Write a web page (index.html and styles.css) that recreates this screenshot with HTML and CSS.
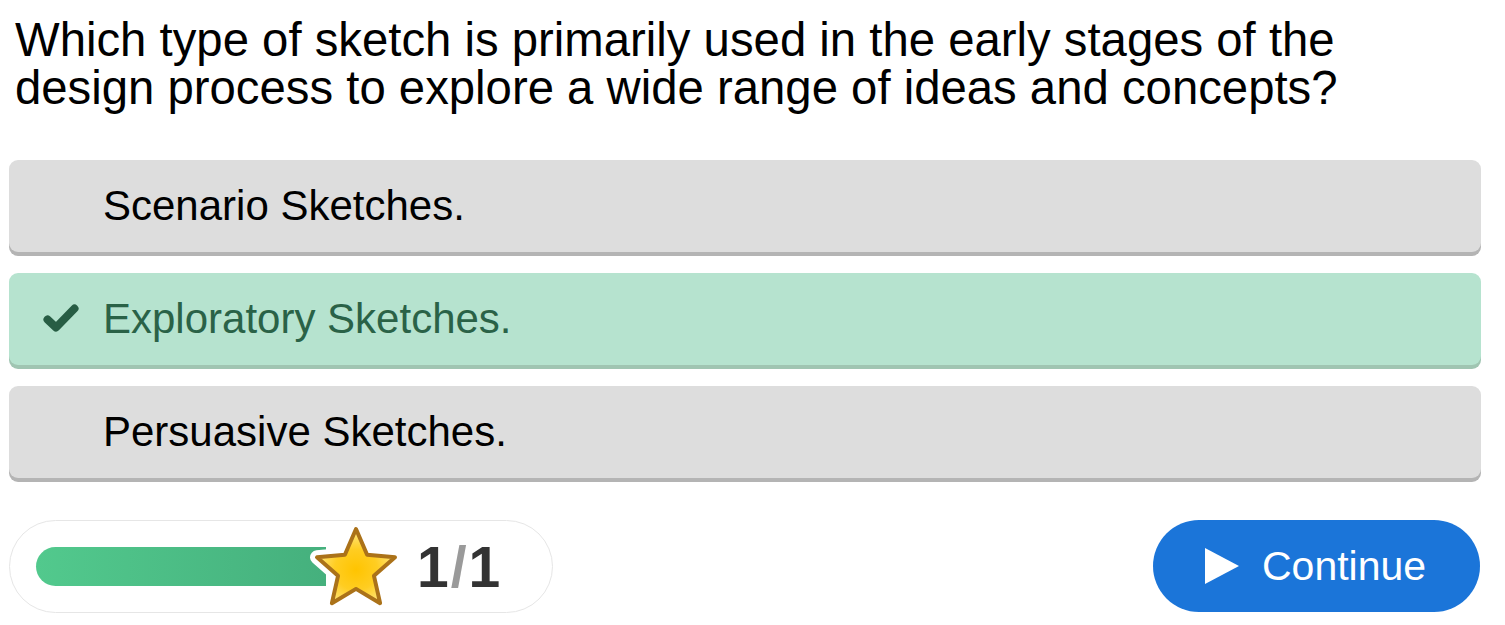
FILE: index.html
```html
<!DOCTYPE html>
<html>
<head>
<meta charset="utf-8">
<link rel="stylesheet" href="styles.css">
</head>
<body>
<div class="quiz">
  <h1 class="question">Which type of sketch is primarily used in the early stages of the design process to explore a wide range of ideas and concepts?</h1>
  <div class="options">
    <div class="option"><span class="mark"></span><span class="label">Scenario Sketches.</span></div>
    <div class="option correct"><span class="mark"><svg width="36" height="28" viewBox="0 0 36 28"><polyline points="4.5,15.5 13,23.5 31.5,4.5" fill="none" stroke="#275d44" stroke-width="8" stroke-linecap="round" stroke-linejoin="round"/></svg></span><span class="label">Exploratory Sketches.</span></div>
    <div class="option"><span class="mark"></span><span class="label">Persuasive Sketches.</span></div>
  </div>
  <div class="footer">
    <div class="progress">
      <div class="track">
        <div class="bar"></div>
        <svg class="star" width="100" height="100" viewBox="-50 -50 100 100">
          <defs>
            <radialGradient id="sg" cx="50%" cy="55%" r="55%">
              <stop offset="0" stop-color="#ffc400"/>
              <stop offset="0.5" stop-color="#ffcd22"/>
              <stop offset="1" stop-color="#ffe98a"/>
            </radialGradient>
          </defs>
          <path d="M0 -41 L11.11 -15.29 L38.99 -12.67 L17.97 5.84 L24.1 33.17 L0 18.9 L-24.1 33.17 L-17.97 5.84 L-38.99 -12.67 L-11.11 -15.29 Z" fill="#ffffff" stroke="#ffffff" stroke-width="14" stroke-linejoin="round"/>
          <path d="M0 -41 L11.11 -15.29 L38.99 -12.67 L17.97 5.84 L24.1 33.17 L0 18.9 L-24.1 33.17 L-17.97 5.84 L-38.99 -12.67 L-11.11 -15.29 Z" fill="url(#sg)" stroke="#ab7219" stroke-width="4" stroke-linejoin="round"/>
        </svg>
      </div>
      <div class="count"><span>1</span><span class="slash">/</span><span>1</span></div>
    </div>
    <button class="continue"><svg width="34" height="36" viewBox="0 0 34 36"><path d="M0 0 L34 18 L0 36 Z" fill="#fff"/></svg><span>Continue</span></button>
  </div>
</div>
</body>
</html>
```
FILE: styles.css
```css
html, body {
  margin: 0;
  padding: 0;
  background: #ffffff;
}
body {
  font-family: "Liberation Sans", Arial, sans-serif;
  color: #000;
}
.quiz {
  padding: 16px 24px 0 9px;
}
.question {
  margin: 0 0 48px 6px;
  padding-right: 4px;
  font-size: 47.3px;
  line-height: 48px;
  font-weight: normal;
}
.options {
  display: flex;
  flex-direction: column;
  gap: 21px;
}
.option {
  height: 92px;
  background: #dddddd;
  border-radius: 9px;
  box-shadow: 0 4px 0 #b4b4b4;
  display: flex;
  align-items: center;
  font-size: 42px;
}
.option .mark {
  width: 94px;
  display: flex;
  justify-content: flex-start;
  padding-left: 34px;
  box-sizing: border-box;
}
.option .mark svg {
  display: block;
  margin-top: -2px;
}
.option.correct {
  background: #b6e3cf;
  box-shadow: 0 4px 0 #a0c5b2;
  color: #2a6247;
}
.footer {
  margin-top: 42px;
  display: flex;
  justify-content: space-between;
  align-items: flex-start;
  padding-right: 1px;
}
.progress {
  width: 544px;
  height: 93px;
  box-sizing: border-box;
  border: 1px solid #e6e6e6;
  border-radius: 47px;
  display: flex;
  align-items: center;
  padding-left: 26px;
}
.track {
  position: relative;
  width: 290px;
  height: 39px;
}
.bar {
  width: 290px;
  height: 39px;
  border-radius: 20px 0 0 20px;
  background: linear-gradient(90deg, #52c98d, #45b07d);
}
.star {
  position: absolute;
  left: 270px;
  top: -27px;
}
.count {
  margin-left: 91px;
  font-size: 57px;
  font-weight: bold;
  color: #333333;
  display: flex;
}
.count .slash {
  color: #9a9a9a;
  margin: 0 2px;
}
.continue {
  width: 327px;
  height: 92px;
  border: none;
  border-radius: 46px;
  background: #1b75d9;
  color: #ffffff;
  font-family: "Liberation Sans", Arial, sans-serif;
  font-size: 41px;
  display: flex;
  align-items: center;
  padding: 0 0 0 52px;
  gap: 23px;
}
.continue svg {
  display: block;
}
```
